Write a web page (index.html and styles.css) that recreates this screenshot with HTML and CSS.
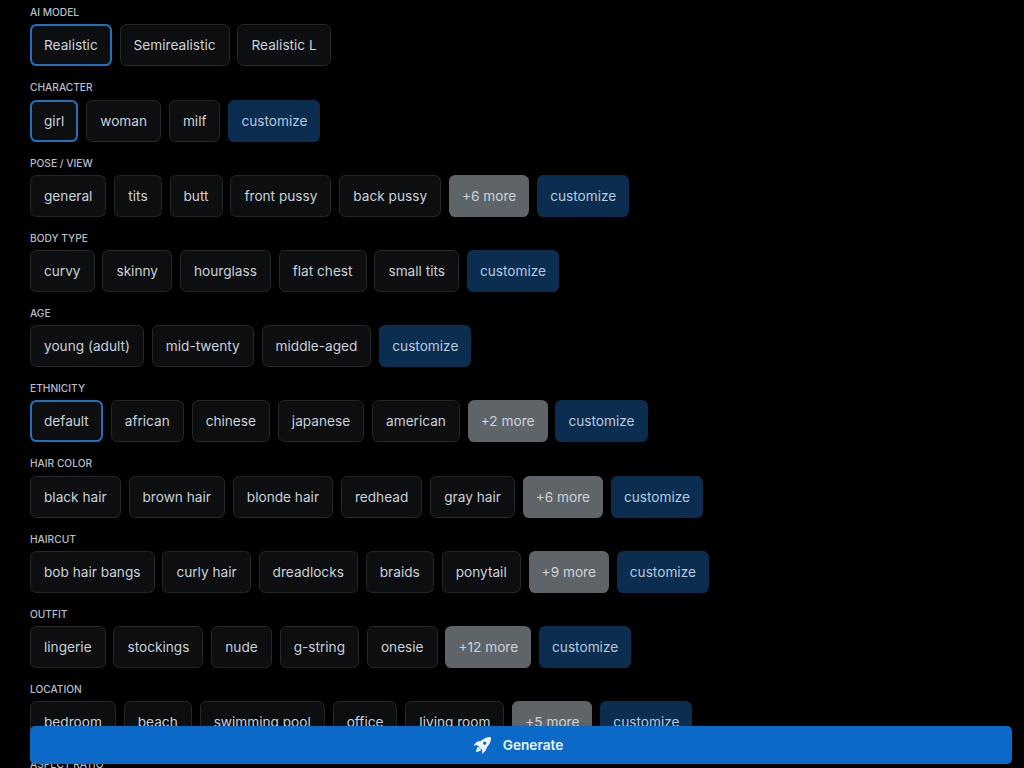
FILE: index.html
```html
<!DOCTYPE html>
<html lang="en">
<head>
  <meta charset="UTF-8" />
  <meta name="viewport" content="width=device-width, initial-scale=1.0">
  <title>Generator</title>
  <link rel="stylesheet" href="styles.css">
</head>
<body>

<div class="form">

  <section class="group">
    <div class="group-label">AI Model</div>
    <div class="options">
      <button class="opt active">Realistic</button>
      <button class="opt">Semirealistic</button>
      <button class="opt">Realistic L</button>
    </div>
  </section>

  <section class="group">
    <div class="group-label">Character</div>
    <div class="options">
      <button class="opt active">girl</button>
      <button class="opt">woman</button>
      <button class="opt">milf</button>
      <button class="opt custom">customize</button>
    </div>
  </section>

  <section class="group">
    <div class="group-label">Pose / View</div>
    <div class="options">
      <button class="opt">general</button>
      <button class="opt">tits</button>
      <button class="opt">butt</button>
      <button class="opt">front pussy</button>
      <button class="opt">back pussy</button>
      <button class="opt more">+6 more</button>
      <button class="opt custom">customize</button>
    </div>
  </section>

  <section class="group">
    <div class="group-label">Body Type</div>
    <div class="options">
      <button class="opt">curvy</button>
      <button class="opt">skinny</button>
      <button class="opt">hourglass</button>
      <button class="opt">flat chest</button>
      <button class="opt">small tits</button>
      <button class="opt custom">customize</button>
    </div>
  </section>

  <section class="group">
    <div class="group-label">Age</div>
    <div class="options">
      <button class="opt">young (adult)</button>
      <button class="opt">mid-twenty</button>
      <button class="opt">middle-aged</button>
      <button class="opt custom">customize</button>
    </div>
  </section>

  <section class="group">
    <div class="group-label">Ethnicity</div>
    <div class="options">
      <button class="opt active">default</button>
      <button class="opt">african</button>
      <button class="opt">chinese</button>
      <button class="opt">japanese</button>
      <button class="opt">american</button>
      <button class="opt more">+2 more</button>
      <button class="opt custom">customize</button>
    </div>
  </section>

  <section class="group">
    <div class="group-label">Hair Color</div>
    <div class="options">
      <button class="opt">black hair</button>
      <button class="opt">brown hair</button>
      <button class="opt">blonde hair</button>
      <button class="opt">redhead</button>
      <button class="opt">gray hair</button>
      <button class="opt more">+6 more</button>
      <button class="opt custom">customize</button>
    </div>
  </section>

  <section class="group">
    <div class="group-label">Haircut</div>
    <div class="options">
      <button class="opt">bob hair bangs</button>
      <button class="opt">curly hair</button>
      <button class="opt">dreadlocks</button>
      <button class="opt">braids</button>
      <button class="opt">ponytail</button>
      <button class="opt more">+9 more</button>
      <button class="opt custom">customize</button>
    </div>
  </section>

  <section class="group">
    <div class="group-label">Outfit</div>
    <div class="options">
      <button class="opt">lingerie</button>
      <button class="opt">stockings</button>
      <button class="opt">nude</button>
      <button class="opt">g-string</button>
      <button class="opt">onesie</button>
      <button class="opt more">+12 more</button>
      <button class="opt custom">customize</button>
    </div>
  </section>

  <section class="group">
    <div class="group-label">Location</div>
    <div class="options">
      <button class="opt">bedroom</button>
      <button class="opt">beach</button>
      <button class="opt">swimming pool</button>
      <button class="opt">office</button>
      <button class="opt">living room</button>
      <button class="opt more">+5 more</button>
      <button class="opt custom">customize</button>
    </div>
  </section>

  <section class="group">
    <div class="group-label">Aspect Ratio</div>
  </section>

</div>

<!-- Sticky generate bar -->
<button class="generate">
  <svg class="rocket" viewBox="0 0 16 16" width="17" height="17" aria-hidden="true">
    <path fill="currentColor" d="M12.17 9.53c2.307-2.592 3.278-4.684 3.641-6.218.21-.887.214-1.58.16-2.065a3.6 3.6 0 0 0-.108-.563 2 2 0 0 0-.078-.23V.453c-.073-.164-.168-.234-.352-.295a2 2 0 0 0-.16-.045 4 4 0 0 0-.57-.093c-.49-.044-1.19-.03-2.08.188-1.536.374-3.618 1.343-6.161 3.604l-2.4.238h-.006a2.55 2.55 0 0 0-1.524.734L.15 7.17a.512.512 0 0 0 .433.868l1.896-.271c.28-.04.592.013.955.132.232.076.437.16.655.248l.203.083c.02.275.074.61.21.97.137.36.367.74.715 1.093.348.348.73.579 1.092.716.36.136.695.19.971.21l.082.202c.089.218.173.424.249.657.118.363.172.676.132.956l-.27 1.893a.513.513 0 0 0 .867.433l2.382-2.386c.41-.41.67-.944.734-1.524zM9.06 6.94a1.5 1.5 0 1 1 2.12-2.12 1.5 1.5 0 0 1-2.12 2.12"/>
    <path fill="currentColor" d="M5.205 10.787a7.6 7.6 0 0 0 1.804 1.352c-1.118 1.007-4.929 2.028-5.054 1.903-.126-.127.737-4.189 1.839-5.18.346.69.837 1.33 1.411 1.925"/>
  </svg>
  Generate
</button>

</body>
</html>
```

FILE: styles.css
```css
/* ----------  PAGE  ---------- */
*{box-sizing:border-box}

html,body{
  height:100%;
  overflow:hidden;
}

body{
  margin:0;
  background:#000;
  color:#c9d1d9;
  font-family:'Inter','Liberation Sans',sans-serif;
}

.form{
  padding:7.2px 12px 0 30px;
}

/* ----------  OPTION GROUPS  ---------- */
.group{
  height:75.2px;
}

.group-label{
  font-size:10.2px;
  line-height:11px;
  font-weight:500;
  text-transform:uppercase;
  color:#b8bfc7;
  margin-bottom:6.2px;
}

.options{
  display:flex;
  gap:7.9px;
}

.opt{
  height:42px;
  padding:0 13px;
  border:1px solid #26282b;
  border-radius:6.4px;
  background:#0d0e10;
  color:#c9d1d9;
  font-family:inherit;
  font-size:13.65px;
  white-space:nowrap;
}

.opt.active{
  border:2px solid #2170bd;
  padding:0 12px;
}

.opt.more{
  background:#5f6469;
  border:none;
  color:#ced3d8;
}

.opt.custom{
  background:#0b2d4f;
  border:none;
  color:#b5c9de;
}

/* ----------  GENERATE BAR  ---------- */
.generate{
  position:fixed;
  left:30px; right:12px; bottom:4px;
  height:38px;
  padding:0 5px 0 0;
  display:flex; justify-content:center; align-items:center;
  gap:12px;
  border:none;
  border-radius:5px;
  background:#0b69c7;
  color:#eef5fc;
  font-family:inherit;
  font-size:13.6px;
  font-weight:600;
}
```
